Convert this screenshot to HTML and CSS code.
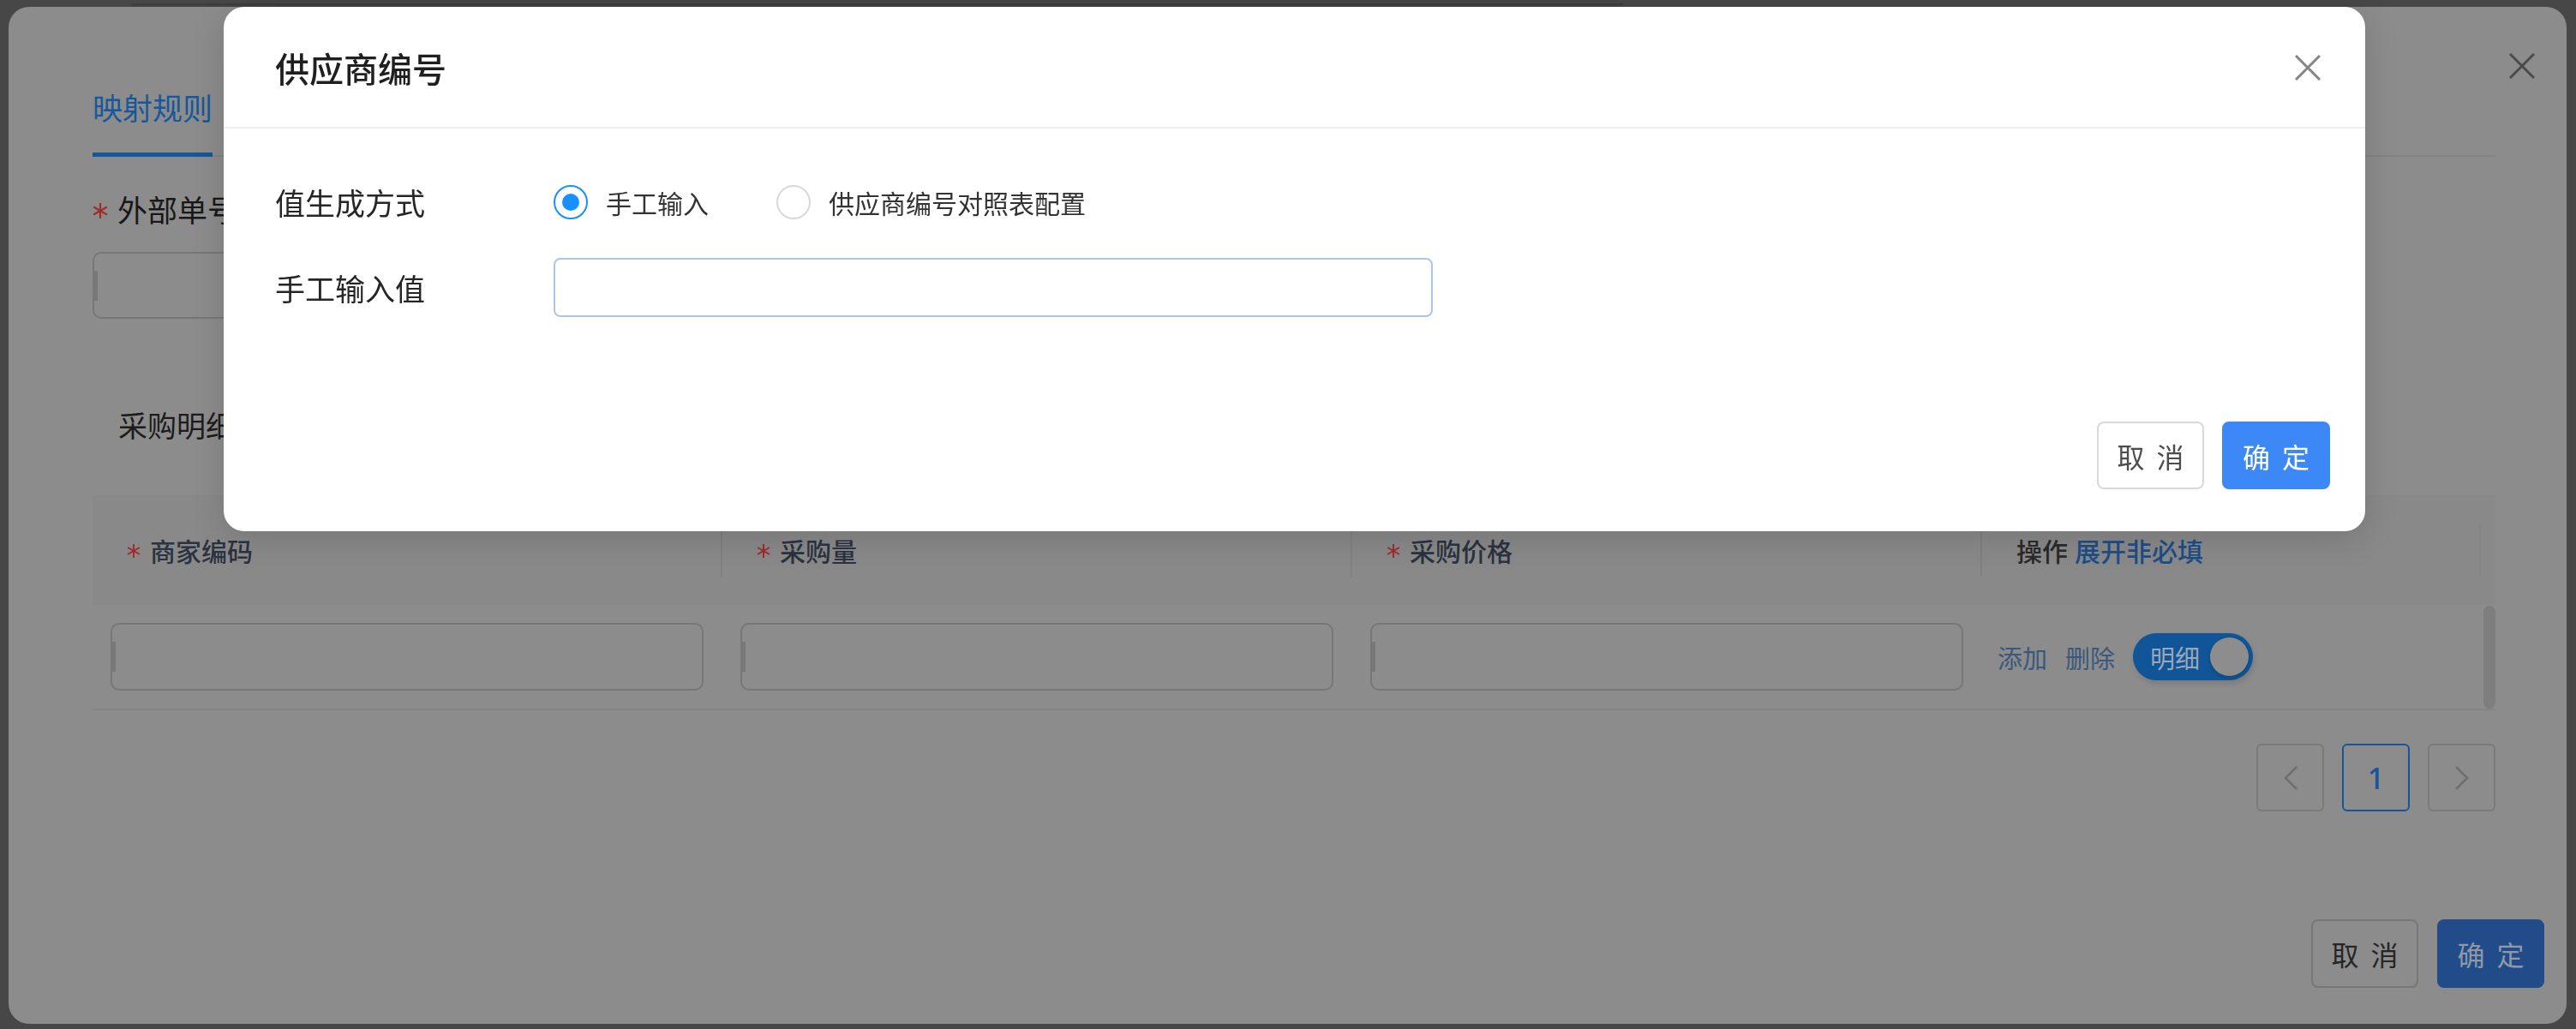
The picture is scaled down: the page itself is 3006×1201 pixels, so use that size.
FILE: index.html
```html
<!DOCTYPE html>
<html lang="zh-CN">
<head>
<meta charset="utf-8">
<title>供应商编号</title>
<link rel="stylesheet" href="styles.css">
</head>
<body>
  <div class="ghost"></div>
  <div class="panel">
    <button class="panel-close" type="button" aria-label="关闭">
      <svg width="30" height="30" viewBox="0 0 30 30"><path d="M1 1 L29 29 M29 1 L1 29" stroke="#4b4b4b" stroke-width="3" fill="none"/></svg>
    </button>
    <div class="panel-body">
      <div class="tabbar"><div class="tab">映射规则</div></div>
      <div class="form-item">
        <div class="flabel"><span class="req"><svg width="18" height="18" viewBox="0 0 18 18"><path d="M9 0 V18 M1.2 4.5 L16.8 13.5 M16.8 4.5 L1.2 13.5" stroke="#a02b2c" stroke-width="2.2" fill="none"/></svg></span>外部单号</div>
        <div class="dim-input outer-input"></div>
      </div>
      <div class="section-title">采购明细</div>
      <div class="table">
        <div class="thead">
          <div class="th sep"><span class="req small"><svg width="16" height="16" viewBox="0 0 18 18"><path d="M9 0 V18 M1.2 4.5 L16.8 13.5 M16.8 4.5 L1.2 13.5" stroke="#a02b2c" stroke-width="2.2" fill="none"/></svg></span>商家编码</div>
          <div class="th sep"><span class="req small"><svg width="16" height="16" viewBox="0 0 18 18"><path d="M9 0 V18 M1.2 4.5 L16.8 13.5 M16.8 4.5 L1.2 13.5" stroke="#a02b2c" stroke-width="2.2" fill="none"/></svg></span>采购量</div>
          <div class="th sep"><span class="req small"><svg width="16" height="16" viewBox="0 0 18 18"><path d="M9 0 V18 M1.2 4.5 L16.8 13.5 M16.8 4.5 L1.2 13.5" stroke="#a02b2c" stroke-width="2.2" fill="none"/></svg></span>采购价格</div>
          <div class="th sep faint">操作 <span class="link-strong">展开非必填</span></div>
          <div class="th gutter"></div>
        </div>
        <div class="trow">
          <div class="td"><div class="dim-input row-input"></div></div>
          <div class="td"><div class="dim-input row-input"></div></div>
          <div class="td"><div class="dim-input row-input"></div></div>
          <div class="td ops">
            <span class="op">添加</span>
            <span class="op">删除</span>
            <span class="toggle"><span class="toggle-text">明细</span><span class="knob"></span></span>
          </div>
          <div class="td gutter"><div class="scrollbar"></div></div>
        </div>
      </div>
      <div class="pager">
        <div class="pg">
          <svg width="18" height="28" viewBox="0 0 18 28"><path d="M16 1 L3 14 L16 27" stroke="#6e6e6e" stroke-width="2.5" fill="none"/></svg>
        </div>
        <div class="pg active">1</div>
        <div class="pg">
          <svg width="18" height="28" viewBox="0 0 18 28"><path d="M2 1 L15 14 L2 27" stroke="#6e6e6e" stroke-width="2.5" fill="none"/></svg>
        </div>
      </div>
    </div>
    <div class="panel-footer">
      <button class="dbtn dcancel" type="button">取消</button>
      <button class="dbtn dok" type="button">确定</button>
    </div>
  </div>

  <div class="modal">
    <div class="modal-header">
      <div class="modal-title">供应商编号</div>
      <button class="modal-close" type="button" aria-label="关闭">
        <svg width="30" height="30" viewBox="0 0 30 30"><path d="M1 1 L29 29 M29 1 L1 29" stroke="#858585" stroke-width="3" fill="none"/></svg>
      </button>
    </div>
    <div class="modal-body">
      <div class="mrow">
        <div class="mlabel">值生成方式</div>
        <div class="radios">
          <label class="radio checked"><span class="rdot"></span><span class="rtext">手工输入</span></label>
          <label class="radio"><span class="rdot"></span><span class="rtext">供应商编号对照表配置</span></label>
        </div>
      </div>
      <div class="mrow second">
        <div class="mlabel">手工输入值</div>
        <div class="minput"></div>
      </div>
    </div>
    <div class="modal-footer">
      <button class="mbtn mcancel" type="button">取消</button>
      <button class="mbtn mok" type="button">确定</button>
    </div>
  </div>
</body>
</html>
```

FILE: styles.css
```css
* { box-sizing: border-box; }

html, body {
  margin: 0;
  padding: 0;
}

body {
  width: 3006px;
  height: 1201px;
  overflow: hidden;
  background: #474747;
  font-family: "Noto Sans CJK SC", "Noto Sans", sans-serif;
  display: flex;
  flex-direction: column;
}

button {
  font-family: inherit;
  cursor: pointer;
}

/* faint element behind the dimmed drawer */
.ghost {
  margin: 4px 0 0 153px;
  width: 1741px;
  height: 4px;
  border-top: 2px solid #3d3d3d;
  background: #444444;
}

/* dimmed background panel */
.panel {
  position: relative;
  margin: 0 11px 0 10px;
  width: 2985px;
  height: 1187px;
  border-radius: 24px;
  background: #8c8c8c;
  display: flex;
  flex-direction: column;
}

.panel-close {
  position: absolute;
  top: 54px;
  right: 37px;
  width: 30px;
  height: 30px;
  padding: 0;
  border: 0;
  background: transparent;
  display: flex;
}

.panel-body {
  padding: 0 83px 0 98px;
}

.tabbar {
  padding-top: 92px;
  border-bottom: 2px solid #828282;
  display: flex;
}

.tab {
  font-size: 35px;
  line-height: 50px;
  padding-bottom: 28px;
  border-bottom: 5px solid #12589a;
  margin-bottom: -2px;
  color: #17589a;
}

.form-item {
  margin-top: 36px;
}

.flabel {
  display: flex;
  align-items: center;
  font-size: 35px;
  line-height: 50px;
  color: #181818;
}

.req {
  display: flex;
  align-items: center;
  width: 29px;
  height: 50px;
  padding-top: 4px;
}

.req.small {
  width: 27px;
  padding-top: 2px;
}

.dim-input {
  position: relative;
  border: 2px solid #777777;
  border-radius: 10px;
}

.dim-input::before {
  content: "";
  position: absolute;
  left: -2px;
  top: 20px;
  width: 6px;
  height: 35px;
  background: #787878;
}

.outer-input {
  margin-top: 25px;
  width: 700px;
  height: 78px;
}

.section-title {
  margin-top: 99px;
  padding-left: 30px;
  font-size: 34px;
  line-height: 50px;
  color: #1c1c1c;
}

.table {
  margin-top: 57px;
}

.thead,
.trow {
  display: grid;
  grid-template-columns: 735px 735px 735px 585px 14px;
}

.thead {
  height: 128px;
  background: #898989;
  align-items: center;
}

.th {
  position: relative;
  height: 100%;
  display: flex;
  align-items: center;
  padding-left: 40px;
  font-size: 30px;
  font-weight: 500;
  color: #2b3240;
  white-space: nowrap;
}

.th.sep::after {
  content: "";
  position: absolute;
  right: 0;
  top: 33px;
  width: 2px;
  height: 62px;
  background: #818181;
}

.th.faint {
  color: #2a2a2a;
}

.th.faint::after {
  right: 3px;
  background: #868686;
}

.link-strong {
  margin-left: 8px;
  color: #1d4d86;
}

.th.gutter {
  padding: 0;
}

.trow {
  border-bottom: 2px solid #848484;
}

.td {
  padding: 21px 22px 21px 21px;
}

.row-input {
  height: 79px;
}

.ops {
  display: flex;
  align-items: center;
  gap: 21px;
  padding-left: 18px;
}

.op {
  font-size: 29px;
  line-height: 40px;
  color: #3a587c;
}

.toggle {
  width: 140px;
  height: 55px;
  border-radius: 28px;
  background: #0f5597;
  display: flex;
  align-items: center;
  justify-content: space-between;
  padding: 0 5px 0 20px;
  box-shadow: 2px 4px 6px rgba(0, 0, 0, 0.12);
}

.toggle-text {
  font-size: 29px;
  line-height: 40px;
  color: #9ba7b6;
}

.knob {
  width: 45px;
  height: 45px;
  border-radius: 50%;
  background: #8d8d8d;
  box-shadow: 0 2px 4px rgba(0, 0, 0, 0.18);
}

.td.gutter {
  padding: 1px 0 0;
}

.scrollbar {
  width: 14px;
  height: 120px;
  border-radius: 7px;
  background: #7e7e7e;
}

.pager {
  margin-top: 39px;
  display: flex;
  justify-content: flex-end;
  gap: 21px;
}

.pg {
  width: 79px;
  height: 79px;
  border: 2px solid #7a7a7a;
  border-radius: 6px;
  display: flex;
  align-items: center;
  justify-content: center;
}

.pg.active {
  border-color: #175598;
  color: #175598;
  font-size: 35px;
  font-weight: 500;
  font-family: "Noto Sans", sans-serif;
}

.panel-footer {
  margin-top: auto;
  display: flex;
  justify-content: flex-end;
  gap: 22px;
  padding: 0 26px 42px 0;
}

.dbtn {
  width: 125px;
  height: 80px;
  border-radius: 8px;
  font-size: 32px;
  letter-spacing: 14px;
  padding: 0 0 0 14px;
}

.dcancel {
  background: transparent;
  border: 2px solid #777777;
  color: #262626;
}

.dok {
  background: #214b89;
  border: 2px solid #214b89;
  color: #8f98a6;
}

/* foreground modal */
.modal {
  position: fixed;
  left: 261px;
  top: 8px;
  width: 2499px;
  height: 612px;
  background: #ffffff;
  border-radius: 24px;
  box-shadow: 0 8px 40px rgba(0, 0, 0, 0.14);
  display: flex;
  flex-direction: column;
}

.modal-header {
  height: 142px;
  border-bottom: 2px solid #efefef;
  padding: 2px 52px 0 60px;
  display: flex;
  align-items: center;
  justify-content: space-between;
}

.modal-title {
  font-size: 40px;
  font-weight: 500;
  line-height: 56px;
  color: #1f1f1f;
}

.modal-close {
  width: 30px;
  height: 30px;
  padding: 0;
  border: 0;
  background: transparent;
  display: flex;
}

.modal-body {
  padding: 61px 0 0 60px;
}

.mrow {
  display: flex;
  align-items: center;
  height: 50px;
}

.mrow.second {
  margin-top: 40px;
  height: 69px;
}

.mlabel {
  width: 325px;
  font-size: 35px;
  line-height: 50px;
  color: #262626;
}

.radios {
  display: flex;
  align-items: center;
  gap: 79px;
}

.radio {
  display: flex;
  align-items: center;
  gap: 21px;
}

.rdot {
  width: 40px;
  height: 40px;
  border-radius: 50%;
  border: 2px solid #d9d9d9;
  display: flex;
  align-items: center;
  justify-content: center;
}

.radio.checked .rdot {
  border-color: #1890ff;
}

.radio.checked .rdot::after {
  content: "";
  width: 20px;
  height: 20px;
  border-radius: 50%;
  background: #1890ff;
}

.rtext {
  font-size: 30px;
  line-height: 44px;
  color: #333333;
}

.minput {
  width: 1026px;
  height: 69px;
  border: 2px solid #abc7e3;
  border-radius: 8px;
}

.modal-footer {
  margin-top: auto;
  display: flex;
  justify-content: flex-end;
  gap: 21px;
  padding: 0 41px 49px 0;
}

.mbtn {
  height: 79px;
  border-radius: 8px;
  font-size: 32px;
  letter-spacing: 14px;
  padding: 0 0 0 14px;
}

.mcancel {
  width: 125px;
  background: #ffffff;
  border: 2px solid #d9d9d9;
  color: #4d4d4d;
}

.mok {
  width: 126px;
  background: #3d88f7;
  border: 2px solid #3d88f7;
  color: #ffffff;
}
```
